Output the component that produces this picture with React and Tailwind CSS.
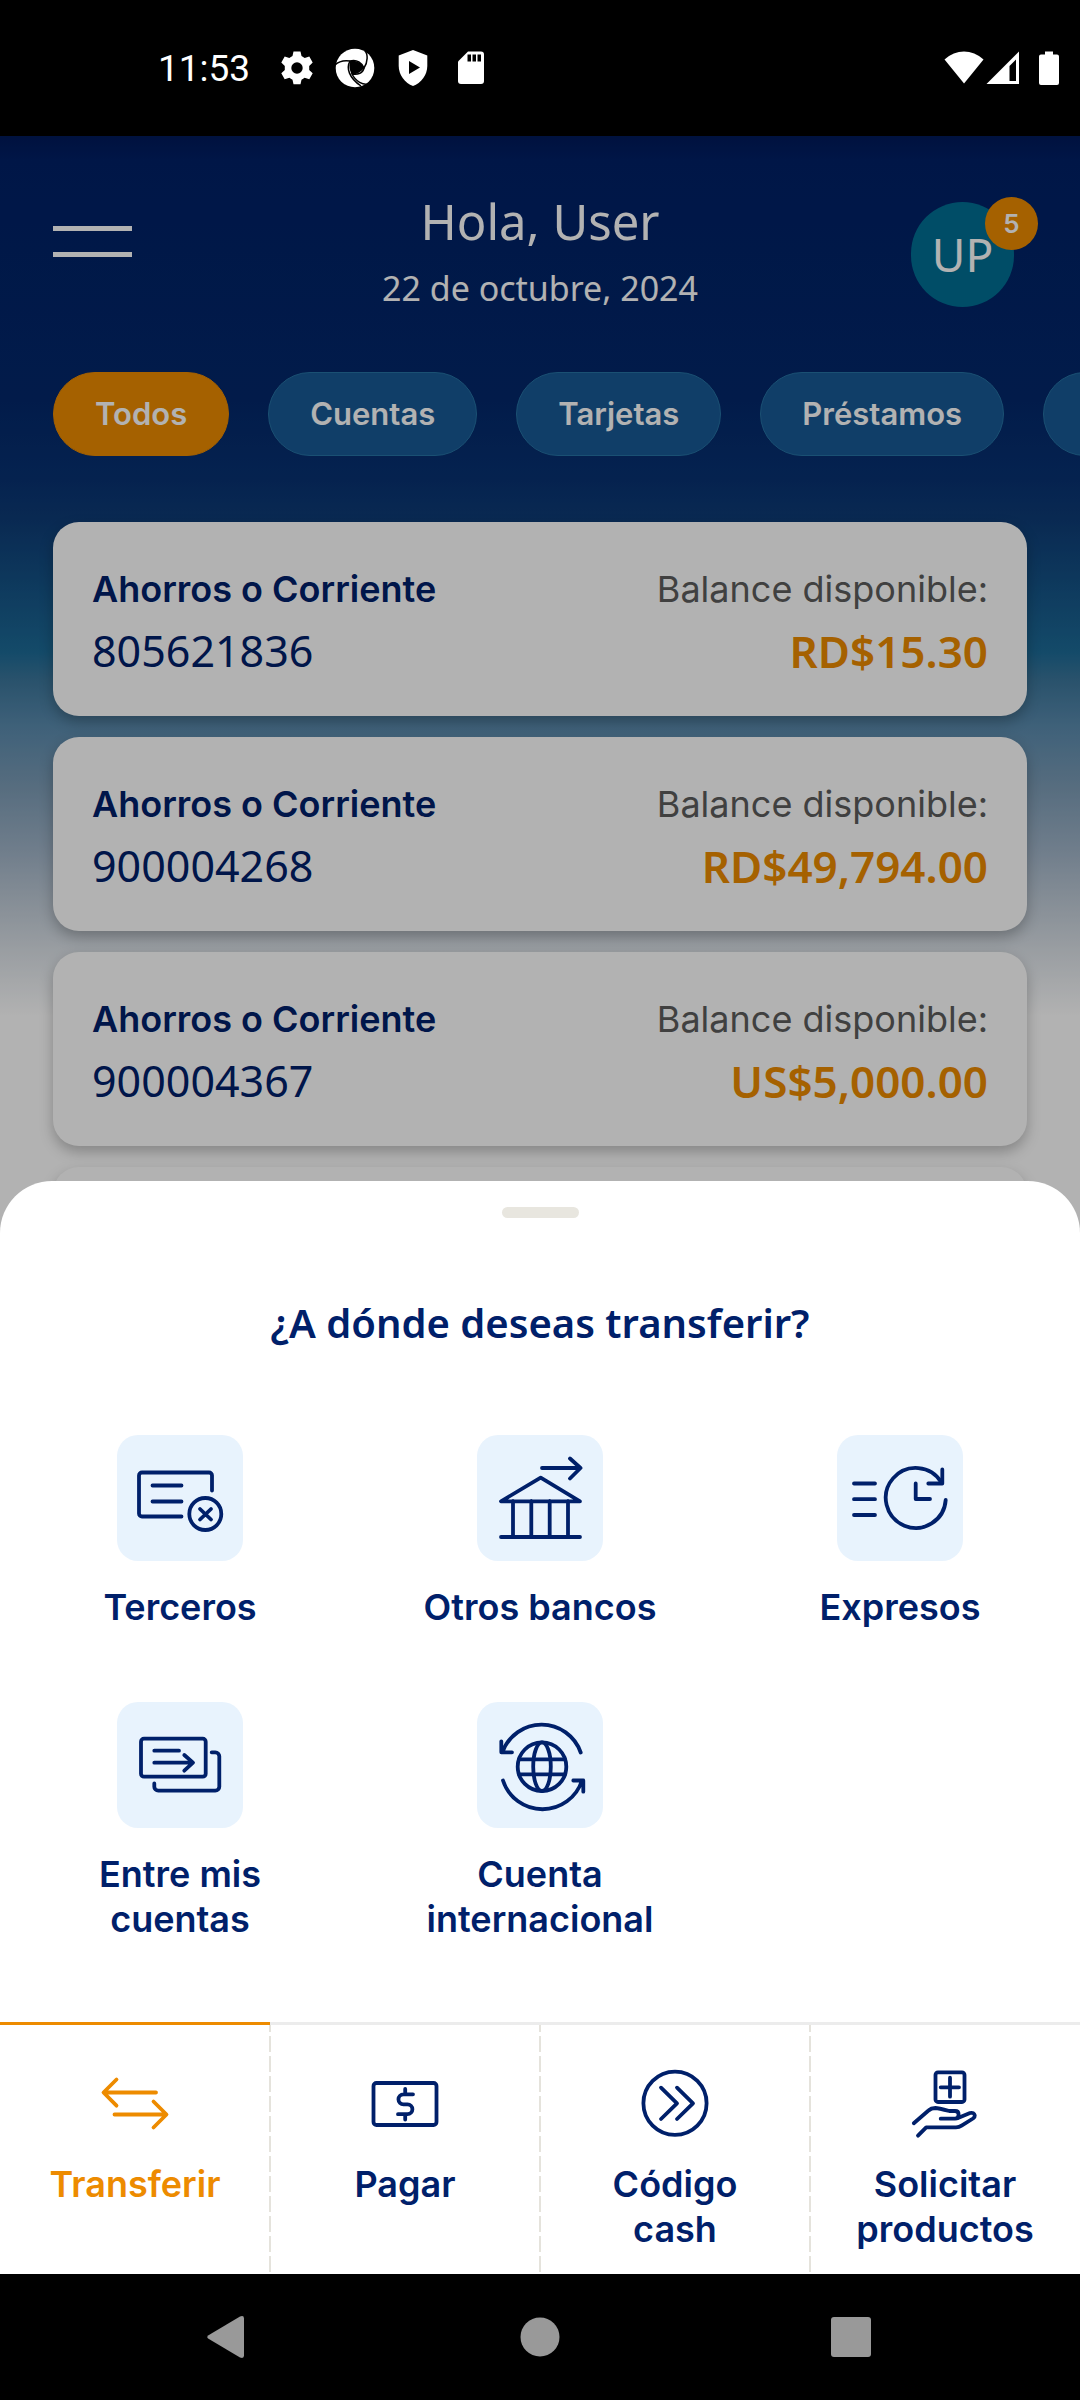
import React from "react";

const DISPLAY = "font-['Noto_Sans',sans-serif]";

function StatusBar() {
  return (
    <div className="flex h-[136px] shrink-0 items-center justify-between bg-black pl-[158px] pr-[20px] text-white">
      <div className="flex items-center">
        <span className="w-[122px] pt-[2px] font-[Roboto,sans-serif] text-[37px] leading-[44px]">11:53</span>
        <svg className="h-[40px] w-[34px]" viewBox="0 0 34 40" fill="currentColor">
          <path
            fillRule="evenodd"
            d="M13.5 3.5h7l1 4.600 3.200 1.900 4.600-1.500 3.400 6-3.500 3.400v4.200l3.500 3.200-3.400 6-4.600-1.500-3.200 1.900-1 4.600h-7l-1-4.600-3.200-1.900-4.600 1.500-3.400-6 3.500-3.200v-4.200l-3.500-3.400 3.400-6 4.600 1.500 3.200-1.900zM17 14.300a5.700 5.700 0 1 0 0 11.400a5.700 5.700 0 1 0 0-11.400z"
          />
        </svg>
        <svg className="ml-[20px] h-[40px] w-[42px]" viewBox="0 0 42 40">
          <circle cx="21" cy="20" r="19.3" fill="currentColor" />
          <g fill="none" stroke="#000" strokeWidth="1.5">
            <path d="M16 13C9 12 4 14 1 17" />
            <path d="M16 13C23 11 28 15 30 20C34 14 34 6 31 3" />
            <path d="M30 20C29 25 24 27 18 26C22 34 29 37 34 36" />
            <path d="M16 13C12 20 15 30 27 38" />
          </g>
          <path d="M16 13C23 12 28 15 30 20C27 24 23 26.5 18 26.5C15 22 15 17 16 13z" fill="#000" />
        </svg>
        <svg className="ml-[22px] h-[40px] w-[30px]" viewBox="0 0 30 40">
          <path d="M15 2L29.3 7.5V18C29.3 27 23 35 15 38C7 35 .7 27 .7 18V7.5z" fill="currentColor" />
          <path d="M11 13L22 19.5L11 26z" fill="#000" />
        </svg>
        <svg className="ml-[29px] h-[40px] w-[28px]" viewBox="0 0 28 40">
          <path d="M11 3.5H24a3 3 0 0 1 3 3V33a3 3 0 0 1-3 3H4a3 3 0 0 1-3-3V13.5z" fill="currentColor" />
          <path d="M10.5 6.5h3.5v7h-3.5zM15.5 6.5h3.5v7h-3.5zM20.5 6.5h3.5v7h-3.5z" fill="#000" />
        </svg>
      </div>
      <div className="flex items-center">
        <svg className="h-[40px] w-[40px]" viewBox="0 0 40 40" fill="currentColor">
          <path d="M.5 11.5C12 .8 28 .8 39.5 11.5L20 35.5z" />
        </svg>
        <svg className="ml-[2px] h-[40px] w-[34px]" viewBox="0 0 34 40">
          <path d="M33 3.5V36H.5z" fill="currentColor" />
          <path d="M23.5 18L30 11.5V33h-6.5z" fill="#000" />
        </svg>
        <svg className="ml-[18px] h-[40px] w-[22px]" viewBox="0 0 22 40" fill="currentColor">
          <path d="M7 3.5h8v3h4a2 2 0 0 1 2 2V35a2 2 0 0 1-2 2H3a2 2 0 0 1-2-2V8.5a2 2 0 0 1 2-2h4z" />
        </svg>
      </div>
    </div>
  );
}

const filters = ["Todos", "Cuentas", "Tarjetas", "Préstamos", "Inversiones"];

const accounts = [
  { number: "805621836", balance: "RD$15.30" },
  { number: "900004268", balance: "RD$49,794.00" },
  { number: "900004367", balance: "US$5,000.00" },
  { number: "", balance: "" },
];

function Dashboard() {
  return (
    <div className="flex flex-col">
      <header className="flex h-[236px] items-start justify-between px-[53px] pt-[42px]">
        <button aria-label="Menú" className="mt-[48px] flex w-[116px] flex-col gap-[21px]">
          <span className="h-[5px] w-[79px] bg-white" />
          <span className="h-[5px] w-[79px] bg-white" />
        </button>
        <div className={`${DISPLAY} flex flex-col items-center pt-[3px] text-white`}>
          <h1 className="text-[49px] font-normal leading-[80px]">Hola, User</h1>
          <p className="text-[34px] font-normal leading-[54px]">22 de octubre, 2024</p>
        </div>
        <div className="flex w-[116px] justify-end pr-[13px] pt-[24px]">
          <button
            className={`${DISPLAY} relative flex h-[105px] w-[105px] items-center justify-center rounded-full bg-[#006f94] text-[46px] font-normal text-white`}
          >
            UP
            <span className="absolute -right-[24px] -top-[5px] flex h-[53px] w-[53px] items-center justify-center rounded-full bg-[#ed8b00] font-[Inter,sans-serif] text-[26px] font-semibold">
              5
            </span>
          </button>
        </div>
      </header>
      <div className="flex gap-[39px] overflow-hidden pl-[53px]">
        {filters.map((f, i) => (
          <button
            key={f}
            className={`h-[84px] shrink-0 rounded-full border px-[41px] font-[Inter,sans-serif] text-[31px] font-semibold text-white ${
              i === 0 ? "border-[#ed8b00] bg-[#ed8b00]" : "border-[#2673a5] bg-[#185995]"
            }`}
          >
            {f}
          </button>
        ))}
      </div>
      <ul className="mt-[66px] flex flex-col gap-[21px] px-[53px]">
        {accounts.map((a, i) => (
          <li
            key={i}
            className="flex h-[194px] justify-between rounded-[26px] bg-white px-[39px] pt-[40px] text-[#00206a] shadow-[0_6px_14px_rgba(0,0,0,0.25)]"
          >
            <div className="flex flex-col">
              <span className="font-[Inter,sans-serif] text-[36px] font-semibold leading-[54px]">Ahorros o Corriente</span>
              <span className={`${DISPLAY} text-[43px] font-normal leading-[70px]`}>{a.number}</span>
            </div>
            <div className="flex flex-col items-end">
              <span className="font-[Inter,sans-serif] text-[36px] font-normal leading-[54px] text-[#5c5c5c]">Balance disponible:</span>
              <span className={`${DISPLAY} text-[44px] font-semibold leading-[70px] text-[#ed8b00]`}>{a.balance}</span>
            </div>
          </li>
        ))}
      </ul>
    </div>
  );
}

const options = [
  {
    label: "Terceros",
    icon: (
      <>
        <path d="M64.5 81.5H25a3 3 0 0 1-3-3v-38a3 3 0 0 1 3-3H92a3 3 0 0 1 3 3V55.5" />
        <path d="M35.5 50.5H64.5M35.5 66.5H64.5M83 74L94 84.5M94 74L83 84.5" />
        <circle cx="88.3" cy="79" r="16" />
      </>
    ),
  },
  {
    label: "Otros bancos",
    icon: (
      <path d="M65 33H103M93 23.5L103.5 33L93 43.5M63.7 42.7L24 66.3H103zM36 66V102M54.3 66V102M72.7 66V102M91 66V102M24 102H103" />
    ),
  },
  {
    label: "Expresos",
    icon: (
      <>
        <path d="M17 48.5H38M17 64.2H38M17 80H38M78.7 48.5V64H93M105.3 34.5V48.5H91.3" />
        <path d="M108.7 65A30 30 0 1 1 104.5 47.5" />
      </>
    ),
  },
  {
    label: "Entre mis cuentas",
    icon: (
      <>
        <rect x="24" y="36.7" width="64.7" height="38" rx="3" />
        <path d="M37.3 48.7H62M37.3 60.7H75M67.3 53L76 60.7L67.3 68.7" />
        <path d="M94.7 50.3H98.3a4 4 0 0 1 4 4V84.7a4 4 0 0 1-4 4H41.3a4 4 0 0 1-4-4V81.5" />
      </>
    ),
  },
  {
    label: "Cuenta internacional",
    icon: (
      <>
        <circle cx="65" cy="64.7" r="24.3" />
        <ellipse cx="65" cy="64.7" rx="8.8" ry="24.3" />
        <path d="M42 57.3H88M42 72.3H88" />
        <path d="M103.7 50.5A41.5 41.5 0 0 0 25.5 50M24.3 39.3V50.3H35" />
        <path d="M26 78.5A41.5 41.5 0 0 0 105 78.5M96.3 78.5H106.3V89.7" />
      </>
    ),
  },
];

function TransferSheet() {
  return (
    <section className="absolute inset-x-0 bottom-0 flex flex-col items-center rounded-t-[52px] bg-white pb-[80px] pt-[26px] text-[#00206a]">
      <span className="h-[11px] w-[77px] rounded-full bg-[#e8e6df]" />
      <h2 className={`${DISPLAY} mt-[75px] text-[40px] font-semibold leading-[60px]`}>¿A dónde deseas transferir?</h2>
      <div className="mt-[82px] grid w-full grid-cols-3 gap-y-[51px]">
        {options.map((o) => (
          <button key={o.label} className="flex min-h-[216px] flex-col items-center gap-[24px]">
            <svg
              className="h-[126px] w-[126px] rounded-[21px] bg-[#e8f3fd]"
              viewBox="0 0 126 126"
              fill="none"
              stroke="currentColor"
              strokeWidth="3.8"
              strokeLinecap="round"
              strokeLinejoin="round"
            >
              {o.icon}
            </svg>
            <span className="max-w-[240px] text-center font-[Inter,sans-serif] text-[36px] font-semibold leading-[45px]">
              {o.label}
            </span>
          </button>
        ))}
      </div>
    </section>
  );
}

const tabs = [
  {
    label: "Transferir",
    icon: (
      <path d="M5 25.5H57M17.5 12.5L4.5 25.5L17.5 38.7M15.5 47.5H67M54.5 34.5L67.5 47.5L54.5 60.5" />
    ),
  },
  {
    label: "Pagar",
    icon: (
      <>
        <rect x="4.5" y="16" width="63" height="42" rx="3" />
        <path d="M44 27.3H34.5a5 5 0 0 0 0 10.1H38.5a4.9 4.9 0 0 1 0 9.8H29M36.2 22V27M36.2 47.5V52.5" />
      </>
    ),
  },
  {
    label: "Código cash",
    icon: (
      <>
        <circle cx="36" cy="36.3" r="31.6" />
        <path d="M22 20.7L38 36.3L22 52M38 20.7L54 36.3L38 52" />
      </>
    ),
  },
  {
    label: "Solicitar productos",
    icon: (
      <>
        <rect x="26.5" y="5.3" width="29" height="29.7" rx="2.5" />
        <path d="M31.7 20.3H50M41 10.7V29.7" />
        <path d="M4.8 56.3L19.5 43.5Q22 41.2 26.5 41Q29 41 40.3 44H46Q49.6 44 49.6 47.5Q49.6 51.7 46 51.7H31.7" />
        <path d="M49 51L61 46Q65 45 65.8 48.5Q66 50 64 51.5L53 58.3Q50 60.3 47 60.3H17.2L9 68.7" />
      </>
    ),
  },
];

function TabBar() {
  return (
    <nav className="grid shrink-0 grid-cols-4 bg-white">
      {tabs.map((t, i) => (
        <button
          key={t.label}
          className={`relative flex flex-col items-center border-t-[3px] pb-[22px] pt-[42px] ${
            i === 0 ? "border-[#ed8b00] text-[#ed8b00]" : "border-[#ececec] text-[#00206a]"
          }`}
        >
          {i > 0 && (
            <span className="absolute -left-px bottom-[2px] top-0 w-[2px] bg-[repeating-linear-gradient(to_top,#e5e3dc_0,#e5e3dc_16px,transparent_16px,transparent_20px)]" />
          )}
          <svg
            className="h-[72px] w-[72px]"
            viewBox="0 0 72 72"
            fill="none"
            stroke="currentColor"
            strokeWidth="3.8"
            strokeLinecap="round"
            strokeLinejoin="round"
          >
            {t.icon}
          </svg>
          <span className="mt-[23px] max-w-[200px] text-center font-[Inter,sans-serif] text-[36px] font-semibold leading-[45px]">
            {t.label}
          </span>
        </button>
      ))}
    </nav>
  );
}

function SystemNav() {
  return (
    <div className="flex h-[126px] shrink-0 items-center justify-between bg-black px-[203px] text-[#999999]">
      <button aria-label="Atrás">
        <svg className="h-[46px] w-[46px]" viewBox="0 0 46 46" fill="currentColor">
          <path d="M5.5 21.2L37 2.5Q41 1 41 4.5V41.5Q41 45 37 43.5L5.5 24.8Q3 23 5.5 21.2z" />
        </svg>
      </button>
      <button aria-label="Inicio">
        <svg className="h-[46px] w-[46px]" viewBox="0 0 46 46" fill="currentColor">
          <circle cx="23" cy="23" r="19.5" />
        </svg>
      </button>
      <button aria-label="Recientes">
        <svg className="h-[46px] w-[46px]" viewBox="0 0 46 46" fill="currentColor">
          <rect x="0" y="3" width="40" height="40" rx="3" />
        </svg>
      </button>
    </div>
  );
}

export default function App() {
  return (
    <div className="flex min-h-screen w-full flex-col bg-white">
      <StatusBar />
      <main className="relative flex-1 overflow-hidden bg-[linear-gradient(to_bottom,#001a5a_0,#002066_24px,#03286b_264px,#083272_344px,#0e3c76_384px,#145185_444px,#1d6b97_516px,#3c769b_544px,#5a8bae_590px,#7c9cb6_650px,#a0b4c8_714px,#bfcbd7_764px,#dce2e8_814px,#ffffff_880px)]">
        <Dashboard />
        <div className="absolute inset-0 bg-black/30" />
        <TransferSheet />
      </main>
      <TabBar />
      <SystemNav />
    </div>
  );
}
